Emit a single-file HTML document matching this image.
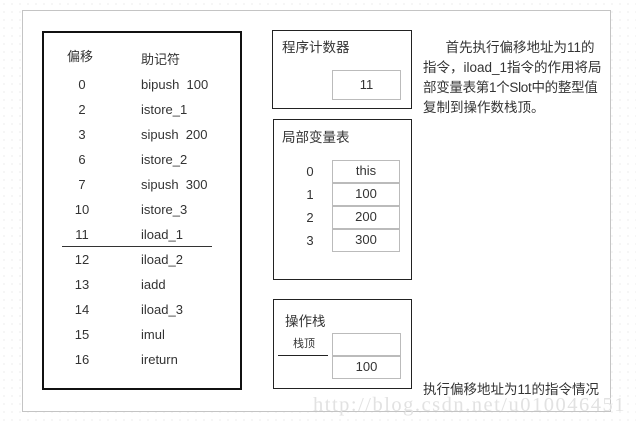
<!DOCTYPE html>
<html><head><meta charset="utf-8"><style>
*{margin:0;padding:0;box-sizing:border-box}
body{width:636px;height:426px;background:#fff;position:relative;overflow:hidden;font-family:"Liberation Sans","Noto Sans CJK SC",sans-serif;color:#333;font-size:13px;
background-image:radial-gradient(#ddd 0.6px,transparent 0.8px);background-size:8px 8px}
.a{position:absolute}
.frame{left:22px;top:10px;width:589px;height:402px;border:1px solid #c4c4c4;background:#fff}
.bx{border:1px solid #222}
.cell{border:1px solid #bbb;text-align:center;line-height:20px;font-size:13px}
.t{white-space:nowrap;line-height:16px}
</style></head><body>
<div class="a frame"></div>
<div class="a" style="left:42px;top:31px;width:200px;height:359px;border:2px solid #111"></div>
<div class="a t" style="left:67px;top:49px">偏移</div>
<div class="a t" style="left:141px;top:52px">助记符</div>
<div class="a t" style="left:62px;top:72px;width:40px;text-align:center;line-height:25px">0<br>2<br>3<br>6<br>7<br>10<br>11<br>12<br>13<br>14<br>15<br>16</div>
<div class="a t" style="left:141px;top:72px;line-height:25px">bipush&nbsp; 100<br>istore_1<br>sipush&nbsp; 200<br>istore_2<br>sipush&nbsp; 300<br>istore_3<br>iload_1<br>iload_2<br>iadd<br>iload_3<br>imul<br>ireturn</div>
<div class="a" style="left:62px;top:246px;width:150px;height:1px;background:#333"></div>

<div class="a bx" style="left:272px;top:30px;width:140px;height:79px"></div>
<div class="a t" style="left:282px;top:40px;font-size:13.5px">程序计数器</div>
<div class="a cell" style="left:332px;top:70px;width:69px;height:30px;line-height:28px">11</div>

<div class="a bx" style="left:273px;top:119px;width:139px;height:161px"></div>
<div class="a t" style="left:282px;top:130px;font-size:13.5px">局部变量表</div>
<div class="a t" style="left:300px;top:160px;width:20px;text-align:center;line-height:23px">0<br>1<br>2<br>3</div>
<div class="a cell" style="left:332px;top:160px;width:68px;height:23px">this</div>
<div class="a cell" style="left:332px;top:183px;width:68px;height:23px">100</div>
<div class="a cell" style="left:332px;top:206px;width:68px;height:23px">200</div>
<div class="a cell" style="left:332px;top:229px;width:68px;height:23px">300</div>

<div class="a bx" style="left:273px;top:299px;width:139px;height:90px"></div>
<div class="a t" style="left:285px;top:314px;font-size:13.5px">操作栈</div>
<div class="a t" style="left:293px;top:336px;font-size:11px">栈顶</div>
<div class="a" style="left:278px;top:355px;width:50px;height:1px;background:#222"></div>
<div class="a cell" style="left:332px;top:333px;width:69px;height:23px"></div>
<div class="a cell" style="left:332px;top:356px;width:69px;height:23px">100</div>

<div class="a t" style="left:423px;top:38px;line-height:20px;font-size:13.5px">&nbsp;&nbsp;&nbsp;&nbsp;&nbsp;&nbsp;首先执行偏移地址为11的<br>指令，iload_1指令的作用将局<br><span style="letter-spacing:-0.3px">部变量表第1个Slot中的整型值</span><br>复制到操作数栈顶。</div>
<div class="a t" style="left:423px;top:382px;font-size:13.5px">执行偏移地址为11的指令情况</div>
<div class="a t" style="left:313px;top:394px;font-family:'Liberation Serif',serif;font-size:20.5px;letter-spacing:1.5px;color:#e2e2e2;line-height:22px">http://blog.csdn.net/u010046451</div>
</body></html>
